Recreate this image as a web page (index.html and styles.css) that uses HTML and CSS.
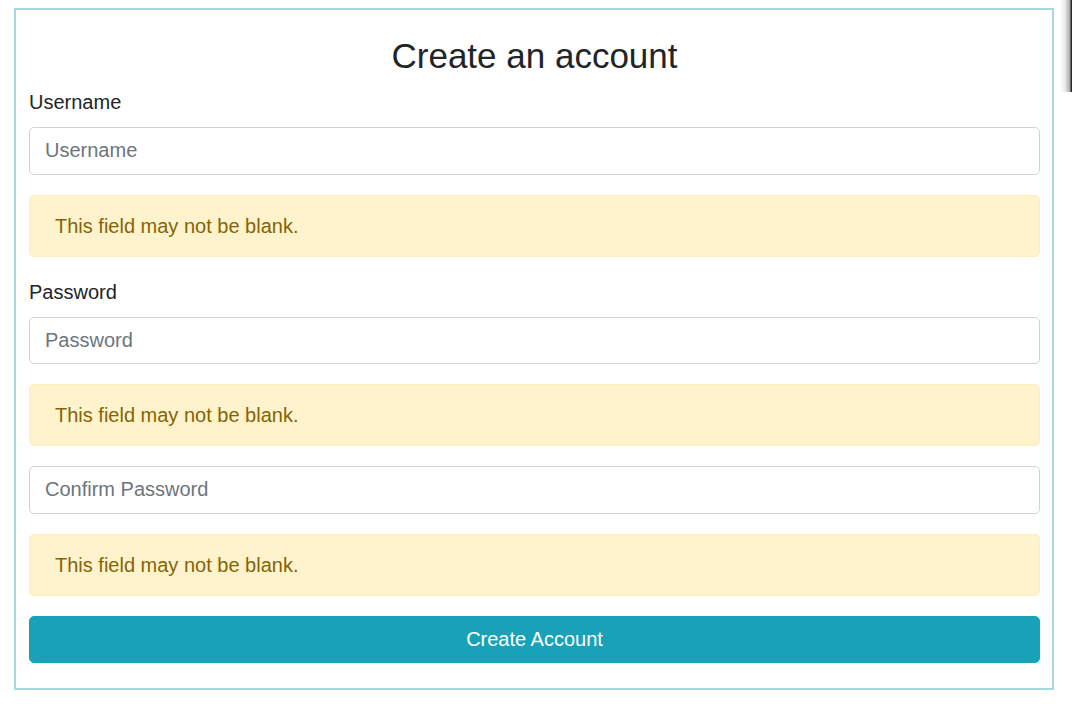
FILE: index.html
```html
<!DOCTYPE html>
<html lang="en">
<head>
<meta charset="utf-8">
<title>Create an account</title>
<link rel="stylesheet" href="styles.css">
</head>
<body>
<div class="edge-shadow"></div>
<div class="card">
  <h3 class="title">Create an account</h3>
  <form class="form">
    <div class="group">
      <label class="label">Username</label>
      <input class="control" type="text" placeholder="Username">
    </div>
    <div class="alert">This field may not be blank.</div>
    <div class="group">
      <label class="label">Password</label>
      <input class="control" type="password" placeholder="Password">
    </div>
    <div class="alert">This field may not be blank.</div>
    <div class="group">
      <input class="control" type="password" placeholder="Confirm Password">
    </div>
    <div class="alert">This field may not be blank.</div>
    <button class="btn" type="button">Create Account</button>
  </form>
</div>
</body>
</html>
```
FILE: styles.css
```css
* { box-sizing: border-box; }
html, body { margin: 0; padding: 0; background: #fff; }
body {
  font-family: "Liberation Sans", Arial, sans-serif;
  font-size: 20px;
  line-height: 1.5;
  color: #212529;
  padding: 8px 18px 0 14px;
  position: relative;
  min-height: 706px;
}
.edge-shadow {
  position: absolute;
  top: 0;
  right: 0;
  width: 12px;
  height: 92px;
  background: linear-gradient(to right, rgba(0,0,0,0) 0%, rgba(0,0,0,0.08) 40%, rgba(0,0,0,0.35) 85%, #2a2a2a 90%, #2a2a2a 100%);
}
.card {
  width: 1040px;
  border: 2px solid #a6d9e1;
  padding: 25px 12px 25px 13px;
}
.title {
  margin: 0 0 10px;
  font-size: 35px;
  font-weight: 400;
  line-height: 1.2;
  text-align: center;
  color: #212529;
}
.form {
  display: flex;
  flex-direction: column;
  gap: 20px;
}
.group {
  display: flex;
  flex-direction: column;
  gap: 10px;
}
.label {
  display: block;
  font-size: 20px;
  line-height: 30px;
}
.control {
  display: block;
  width: 100%;
  height: 47.5px;
  padding: 7.5px 15px;
  font-family: inherit;
  font-size: 20px;
  line-height: 30px;
  color: #495057;
  background: #fff;
  border: 1px solid #ced4da;
  border-radius: 5px;
  outline: none;
}
.control::placeholder { color: #6c757d; opacity: 1; }
.alert {
  padding: 15px 25px;
  background: #fff3cd;
  border: 1px solid #ffeeba;
  color: #856404;
  border-radius: 5px;
  font-size: 20px;
  line-height: 30px;
}
.btn {
  display: block;
  width: 100%;
  height: 47.5px;
  padding: 7.5px 15px;
  font-family: inherit;
  font-size: 20px;
  line-height: 30px;
  color: #fff;
  background: #17a2b8;
  border: 1px solid #17a2b8;
  border-radius: 5px;
  text-align: center;
}
```
